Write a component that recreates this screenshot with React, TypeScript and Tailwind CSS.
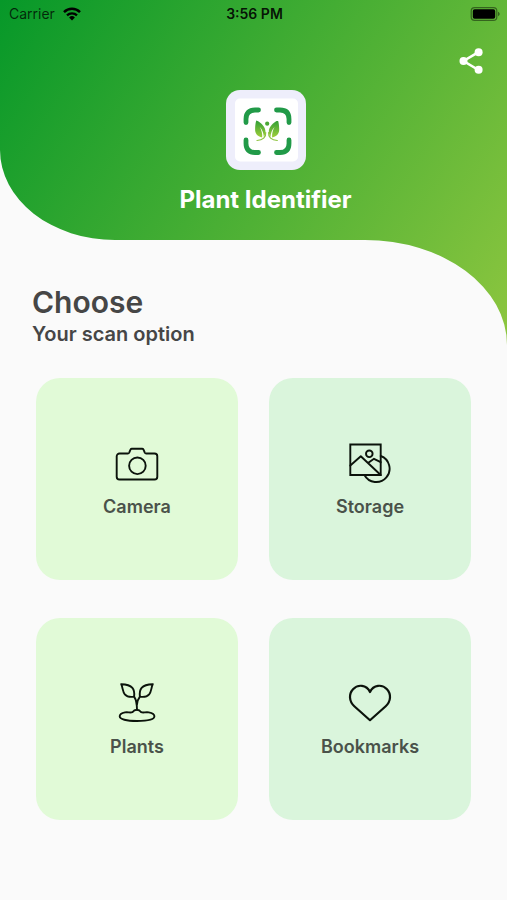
import React from 'react';
import clsx from 'clsx';

type Option = {
  label: string;
  tone: string;
  icon: React.ReactNode;
};

const HeaderShape: React.FC = () => (
  <svg
    className="absolute inset-x-0 top-0 w-full h-[345px]"
    viewBox="0 0 507 345"
    preserveAspectRatio="none"
    aria-hidden="true"
  >
    <defs>
      <linearGradient id="leaf" gradientUnits="userSpaceOnUse" x1="0" y1="0" x2="507" y2="345">
        <stop offset="0" stopColor="#069829" />
        <stop offset="1" stopColor="#8dc63f" />
      </linearGradient>
    </defs>
    <path d="M0 0H507V345A142 105 0 0 0 365 240H115A115 90 0 0 1 0 150Z" fill="url(#leaf)" />
  </svg>
);

const WifiIcon: React.FC = () => (
  <svg width="18" height="14" viewBox="0 0 18 14" fill="none" stroke="currentColor" aria-hidden="true">
    <path d="M1 5.1a11.4 11.4 0 0 1 16 0" strokeWidth="2.5" />
    <path d="M4 8.3a7.2 7.2 0 0 1 10 0" strokeWidth="2.3" />
    <path d="M9 13.4 6.1 10.5a4.2 4.2 0 0 1 5.8 0Z" fill="currentColor" stroke="none" />
  </svg>
);

const BatteryIcon: React.FC = () => (
  <svg width="30" height="14" viewBox="0 0 30 14" aria-hidden="true">
    <rect x="1.2" y="0.7" width="25.6" height="12.6" rx="3.4" fill="none" stroke="#000" strokeOpacity="0.45" strokeWidth="1.2" />
    <rect x="2.8" y="2.3" width="22.4" height="9.4" rx="1.8" fill="#000" />
    <path d="M28 4.8v4.4c1-.4 1.7-1.2 1.7-2.2s-.7-1.8-1.7-2.2Z" fill="#000" fillOpacity="0.45" />
  </svg>
);

const ShareIcon: React.FC = () => (
  <svg width="24" height="26" viewBox="0 0 24 26" fill="#fff" stroke="#fff" aria-hidden="true">
    <path d="M19.5 4.2 4.5 13l15 9" fill="none" strokeWidth="2.6" />
    <circle cx="19.6" cy="4.2" r="4" stroke="none" />
    <circle cx="4.5" cy="13" r="4" stroke="none" />
    <circle cx="19.6" cy="21.8" r="4" stroke="none" />
  </svg>
);

const Logo: React.FC = () => (
  <svg width="80" height="80" viewBox="0 0 80 80" fill="none" aria-hidden="true">
    <defs>
      <linearGradient id="wing" x1="0" y1="0" x2="0" y2="1">
        <stop offset="0" stopColor="#2f9e36" />
        <stop offset="1" stopColor="#a2cf3a" />
      </linearGradient>
    </defs>
    <rect width="80" height="80" rx="14" fill="#eeeefb" />
    <rect x="9" y="8.5" width="63" height="63" rx="5" fill="#fff" />
    <path
      d="M20 32.5V29q0-9 9-9h3.5M50.5 20H54q9 0 9 9v3.5M63 50v3.5q0 9-9 9h-3.5M32.5 62.5H29q-9 0-9-9V50"
      stroke="#219a48"
      strokeWidth="4.8"
      strokeLinecap="round"
    />
    <circle cx="41.2" cy="33.7" r="2.1" fill="#4aa835" />
    <g fill="url(#wing)">
      <path d="M30.3 30.5c5.2 2 9.2 6.7 9.2 11.3 0 2-.7 3.7-1.7 4.9-.2-3.3-1.3-6.7-4-9.7 1.8 3.4 2.7 6.9 2.4 10.5-5-1.2-7.3-4.2-7.1-8.5.1-2.9.3-5.9 1.2-8.5Z" />
      <path d="M52 30.5c-5.2 2-9.2 6.7-9.2 11.3 0 2 .7 3.7 1.7 4.9.2-3.3 1.3-6.7 4-9.7-1.8 3.4-2.7 6.9-2.4 10.5 5-1.2 7.3-4.2 7.1-8.5-.1-2.9-.3-5.9-1.2-8.5Z" />
    </g>
    <path d="M39.7 42.5c.4 4.5-2.7 8-8.7 8M42.6 42.5c-.4 4.5 2.7 8 8.7 8" stroke="#8fc440" strokeWidth="1.2" strokeLinecap="round" />
  </svg>
);

const OptionIcon: React.FC<{ children: React.ReactNode }> = ({ children }) => (
  <svg
    className="size-11"
    viewBox="0 0 44 44"
    fill="none"
    stroke="#0b130b"
    strokeWidth="1.9"
    strokeLinejoin="round"
    strokeLinecap="round"
    aria-hidden="true"
  >
    {children}
  </svg>
);

const options: Option[] = [
  {
    label: 'Camera',
    tone: 'bg-[#e1fad7]',
    icon: (
      <OptionIcon>
        <path d="M4.5 14.5h8.3c.7 0 1.1-.3 1.4-.9l1.3-3c.3-.6.7-.9 1.4-.9h10.2c.7 0 1.1.3 1.4.9l1.3 3c.3.6.7.9 1.4.9h8.3c1.6 0 2.8 1.2 2.8 2.8v20.4c0 1.6-1.2 2.8-2.8 2.8h-35c-1.6 0-2.8-1.2-2.8-2.8V17.3c0-1.6 1.2-2.8 2.8-2.8Z" />
        <circle cx="22.4" cy="26.8" r="8.3" />
      </OptionIcon>
    ),
  },
  {
    label: 'Storage',
    tone: 'bg-[#daf5dc]',
    icon: (
      <OptionIcon>
        <path d="M2.3 5.5h30.4V36H2.3Z" strokeLinejoin="miter" />
        <path d="M2.3 26.5 12.8 17.3 32.7 36M20 24l6-4.2 6.7 3.4" />
        <circle cx="21.3" cy="14.8" r="3.3" />
        <path d="M32.7 17a13.4 13.4 0 1 1-16.3 19" />
      </OptionIcon>
    ),
  },
  {
    label: 'Plants',
    tone: 'bg-[#e1fad7]',
    icon: (
      <OptionIcon>
        <path d="M6.2 5.2c5 .1 8.8.9 11.2 3.7 1.9 2.3 2.1 5.400 1.700 8.700-3.700.7-7.100.1-9.300-2.300-2.200-2.500-1.900-6.400-3.600-10.100Z" />
        <path d="M37.8 5.200c-5 .1-8.800.9-11.200 3.700-1.900 2.300-2.100 5.400-1.700 8.700 3.700.7 7.100.1 9.300-2.300 2.200-2.500 1.900-6.400 3.600-10.100Z" />
        <path d="M19.100 17.600c2.200 3.200 2.900 6.400 2.900 13.200M24.900 17.600c-2 2.500-2.800 4.700-3 8.400" />
        <path d="M17.400 33.200c1.200-1.600 2.600-2.400 4.400-2.400s3.200.8 4.400 2.400c2.200.9 4.400-.4 7.600.2 3.400.6 5.600 2 5.600 3.900 0 3-7 4.700-17.500 4.700S4.700 40.300 4.700 37.300c0-1.900 2.100-3.300 5.300-3.900 3-.5 5.300.6 7.400-.2Z" />
      </OptionIcon>
    ),
  },
  {
    label: 'Bookmarks',
    tone: 'bg-[#daf5dc]',
    icon: (
      <OptionIcon>
        <path
          d="M22 41.200 6.300 27.200C.8 22.200.8 14.700 5 10.200 9.800 5 18.500 5.500 22 13 25.500 5.500 34.200 5 39 10.200c4.200 4.500 4.200 12-1.300 17L22 41.200Z"
          strokeWidth="2.2"
        />
      </OptionIcon>
    ),
  },
];

const App: React.FC = () => {
  return (
    <div className="relative min-h-screen bg-[#fafafa] font-['Inter',sans-serif]">
      <HeaderShape />

      <div className="relative">
        <div className="grid grid-cols-3 items-center h-7 pl-[9px] pr-[7px] text-sm text-black/75">
          <div className="flex items-center gap-2">
            <span>Carrier</span>
            <span className="text-black"><WifiIcon /></span>
          </div>
          <span className="text-center font-semibold text-black/90">3:56 PM</span>
          <div className="flex justify-end">
            <BatteryIcon />
          </div>
        </div>

        <header className="flex flex-col h-[212px]">
          <div className="flex justify-end px-4 pt-3">
            <button type="button" aria-label="Share" className="p-2">
              <ShareIcon />
            </button>
          </div>
          <div className="flex flex-col items-center pl-6 pt-2">
            <Logo />
            <h1 className="mt-3 text-2xl leading-9 font-bold text-white">Plant Identifier</h1>
          </div>
        </header>

        <main className="px-8 pt-11">
          <h2 className="text-3xl leading-9 font-semibold text-[#464646]">Choose</h2>
          <p className="text-xl leading-7 font-semibold text-[#464646]">Your scan option</p>

          <div className="grid grid-cols-2 gap-x-[31px] gap-y-[38px] px-1 pt-[30px] pb-20">
            {options.map((option) => (
              <button
                key={option.label}
                type="button"
                className={clsx(
                  'aspect-square rounded-3xl flex flex-col items-center justify-center gap-3',
                  option.tone
                )}
              >
                {option.icon}
                <span className="text-lg leading-6 font-semibold text-[#4a524a]">{option.label}</span>
              </button>
            ))}
          </div>
        </main>
      </div>
    </div>
  );
};

export default App;
